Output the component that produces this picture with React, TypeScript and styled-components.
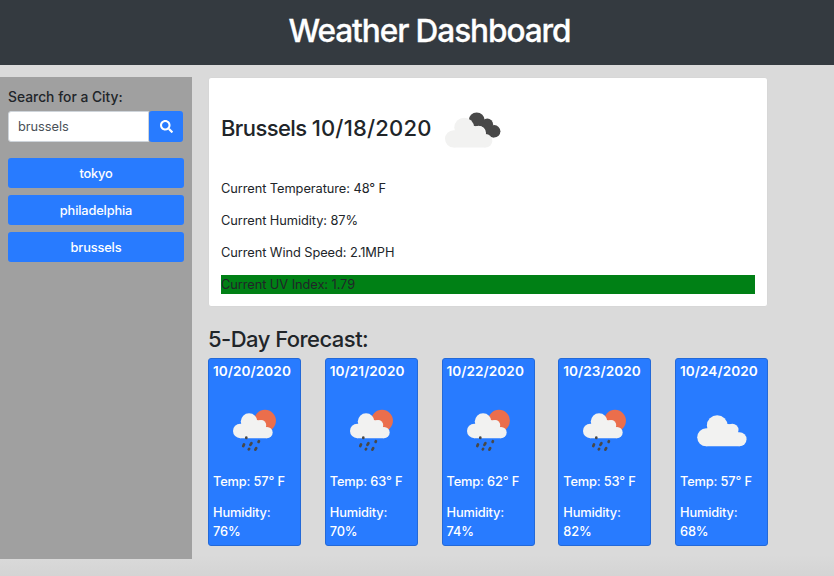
import React from "react";
import styled, { createGlobalStyle } from "styled-components";

const GlobalStyle = createGlobalStyle`
  *, *::before, *::after { box-sizing: border-box; }
  body {
    margin: 0;
    background: #dadada;
    color: #212529;
    font-family: Inter, "Liberation Sans", sans-serif;
    font-size: 12.8px;
    line-height: 19.2px;
  }
  h1, h2, h3, h4, p { margin: 0; font-weight: 500; }
`;

const Page = styled.div`
  height: 576px;
  overflow: hidden;
  background: linear-gradient(#dadada 0, #dadada 555px, #d4d4d4 576px);
`;

const Header = styled.header`
  height: 65px;
  padding: 12px 0 0 25px;
  background: #343a40;
  text-align: center;
`;

const Title = styled.h1`
  color: #fff;
  font-size: 31.6px;
  line-height: 38px;
  letter-spacing: -1.1px;
  -webkit-text-stroke: 0.3px #fff;
`;

const Main = styled.div`
  display: flex;
  gap: 16px;
  padding-top: 12px;
`;

const Sidebar = styled.aside`
  width: 192px;
  height: 482px;
  padding: 10px 8px;
  background: #a0a0a0;
`;

const Label = styled.label`
  display: block;
  height: 24px;
  font-size: 13.8px;
  font-weight: 500;
  line-height: 20px;
  letter-spacing: 0.02px;
`;

const SearchRow = styled.form`
  display: flex;
  height: 31px;
  margin-bottom: 16px;
`;

const SearchInput = styled.input`
  width: 141px;
  height: 31px;
  padding: 0 9px;
  border: 1px solid #ced4da;
  border-radius: 3px 0 0 3px;
  outline: none;
  background: #fff;
  color: #495057;
  font: inherit;
  letter-spacing: -0.05px;
`;

const SearchButton = styled.button`
  display: flex;
  align-items: center;
  justify-content: center;
  width: 34px;
  height: 31px;
  padding: 0;
  border: 0;
  border-radius: 3px;
  background: #287bff;
  color: #fff;
`;

const CityList = styled.div`
  display: grid;
  gap: 7px;
`;

const CityButton = styled.button`
  height: 30px;
  padding: 1px 0 0;
  border: 0;
  border-radius: 3px;
  background: #287bff;
  color: #fff;
  font: inherit;
  font-weight: 500;
  letter-spacing: -0.15px;
`;

const Content = styled.main`
  width: 560px;
`;

const CurrentCard = styled.section`
  height: 230px;
  padding: 31px 12px 0;
  border: 1px solid #d7d7d7;
  border-radius: 3px;
  background: #fff;
`;

const CityHeading = styled.div`
  display: flex;
  align-items: center;
  height: 40px;
  margin-bottom: 30px;
`;

const CityName = styled.h2`
  width: 224px;
  padding-bottom: 2px;
  font-size: 22px;
  line-height: 28px;
  letter-spacing: -0.6px;
  white-space: nowrap;
`;

const CurrentDate = styled.span`
  letter-spacing: 0.18px;
`;

const Reading = styled.p<{ $fill?: string }>`
  height: 19px;
  margin-bottom: 13px;
  background: ${({ $fill }) => $fill ?? "transparent"};
  font-weight: 400;
  letter-spacing: -0.06px;
`;

const ForecastTitle = styled.h3`
  margin: 18px 0 5px;
  font-size: 22px;
  line-height: 28px;
  letter-spacing: -0.53px;
`;

const ForecastGrid = styled.div`
  display: grid;
  grid-template-columns: repeat(5, 93px);
  justify-content: space-between;
`;

const DayCard = styled.article`
  height: 188px;
  padding: 2px 4px;
  border: 1px solid #2369d8;
  border-radius: 3px;
  background: #287bff;
  color: #fff;
`;

const DayDate = styled.h4`
  height: 45px;
  font-size: 13.6px;
  font-weight: 600;
  line-height: 20px;
  letter-spacing: 0.06px;
  white-space: nowrap;
`;

const DayIcon = styled.div`
  height: 66px;
  padding-left: 15px;
`;

const DayText = styled.p`
  margin-bottom: 12px;
  letter-spacing: -0.15px;
`;

const Drawing = styled.svg`
  display: block;
`;

const Cloud = () => (
  <g fill="#f2f2f1">
    <circle cx="60" cy="31" r="31" />
    <circle cx="105" cy="44" r="19" />
    <circle cx="127" cy="72" r="21" />
    <circle cx="27" cy="66" r="27" />
    <path d="M27 93V42L60 20 105 28 127 55V93Z" />
  </g>
);

const SearchIcon = () => (
  <Drawing width="13" height="13" viewBox="0 0 512 512" fill="currentColor">
    <path d="M505 442.7 405.3 343c-4.5-4.5-10.6-7-17-7H372c27.600-35.300 44-79.700 44-128C416 93.100 322.900 0 208 0S0 93.100 0 208s93.100 208 208 208c48.300 0 92.700-16.400 128-44v16.300c0 6.400 2.500 12.500 7 17l99.700 99.700c9.400 9.400 24.600 9.400 33.900 0l28.300-28.300c9.400-9.400 9.400-24.600.1-34zM208 336c-70.700 0-128-57.200-128-128 0-70.700 57.200-128 128-128 70.700 0 128 57.200 128 128 0 70.700-57.200 128-128 128z" />
  </Drawing>
);

const BrokenCloudsIcon = () => (
  <Drawing width="56" height="40" viewBox="0 0 56 40">
    <g fill="#484848">
      <circle cx="31.700" cy="11.500" r="8" />
      <circle cx="42.300" cy="15.300" r="5.800" />
      <circle cx="49.200" cy="22.300" r="6.200" />
      <path d="m31 10 11 5 7 8v5.400l-7-1-11-9Z" />
    </g>
    <circle cx="34" cy="24" r="7" fill="#fff" />
    <g transform="translate(0 8.700) scale(.32)">
      <Cloud />
    </g>
  </Drawing>
);

const RainIcon = () => (
  <Drawing width="50" height="50" viewBox="0 0 50 50">
    <circle cx="37" cy="14.700" r="10.900" fill="#eb6e4c" />
    <g transform="translate(5 7.300) scale(.268)">
      <Cloud />
    </g>
    <g fill="none" stroke="#484848" strokeWidth="2.700" strokeLinecap="round">
      <path d="M18.300 31.700v.2M16 38.400l-.7 1.600M23.400 37.200l-1 1.700M30.900 35.200l-.3.700M21.100 42.900l-.3.500M28.200 42.200l-.8 1.500" />
    </g>
  </Drawing>
);

const CloudIcon = () => (
  <Drawing width="54" height="50" viewBox="0 0 54 50">
    <g transform="translate(2.200 9.300) scale(.3333)">
      <Cloud />
    </g>
  </Drawing>
);

const cities = ["tokyo", "philadelphia", "brussels"];

const days = [
  { date: "10/20/2020", temp: 57, humidity: 76, rain: true },
  { date: "10/21/2020", temp: 63, humidity: 70, rain: true },
  { date: "10/22/2020", temp: 62, humidity: 74, rain: true },
  { date: "10/23/2020", temp: 53, humidity: 82, rain: true },
  { date: "10/24/2020", temp: 57, humidity: 68, rain: false },
];

export default function App() {
  return (
    <Page>
      <GlobalStyle />
      <Header>
        <Title>Weather Dashboard</Title>
      </Header>
      <Main>
        <Sidebar>
          <Label htmlFor="city">Search for a City:</Label>
          <SearchRow onSubmit={(e) => e.preventDefault()}>
            <SearchInput id="city" defaultValue="brussels" />
            <SearchButton aria-label="Search">
              <SearchIcon />
            </SearchButton>
          </SearchRow>
          <CityList>
            {cities.map((city) => (
              <CityButton key={city}>{city}</CityButton>
            ))}
          </CityList>
        </Sidebar>
        <Content>
          <CurrentCard>
            <CityHeading>
              <CityName>
                Brussels <CurrentDate>10/18/2020</CurrentDate>
              </CityName>
              <BrokenCloudsIcon />
            </CityHeading>
            <Reading>Current Temperature: 48° F</Reading>
            <Reading>Current Humidity: 87%</Reading>
            <Reading>Current Wind Speed: 2.1MPH</Reading>
            <Reading $fill="#008015">Current UV Index: 1.79</Reading>
          </CurrentCard>
          <ForecastTitle>5-Day Forecast:</ForecastTitle>
          <ForecastGrid>
            {days.map((day) => (
              <DayCard key={day.date}>
                <DayDate>{day.date}</DayDate>
                <DayIcon>{day.rain ? <RainIcon /> : <CloudIcon />}</DayIcon>
                <DayText>Temp: {day.temp}° F</DayText>
                <DayText>Humidity: {day.humidity}%</DayText>
              </DayCard>
            ))}
          </ForecastGrid>
        </Content>
      </Main>
    </Page>
  );
}
